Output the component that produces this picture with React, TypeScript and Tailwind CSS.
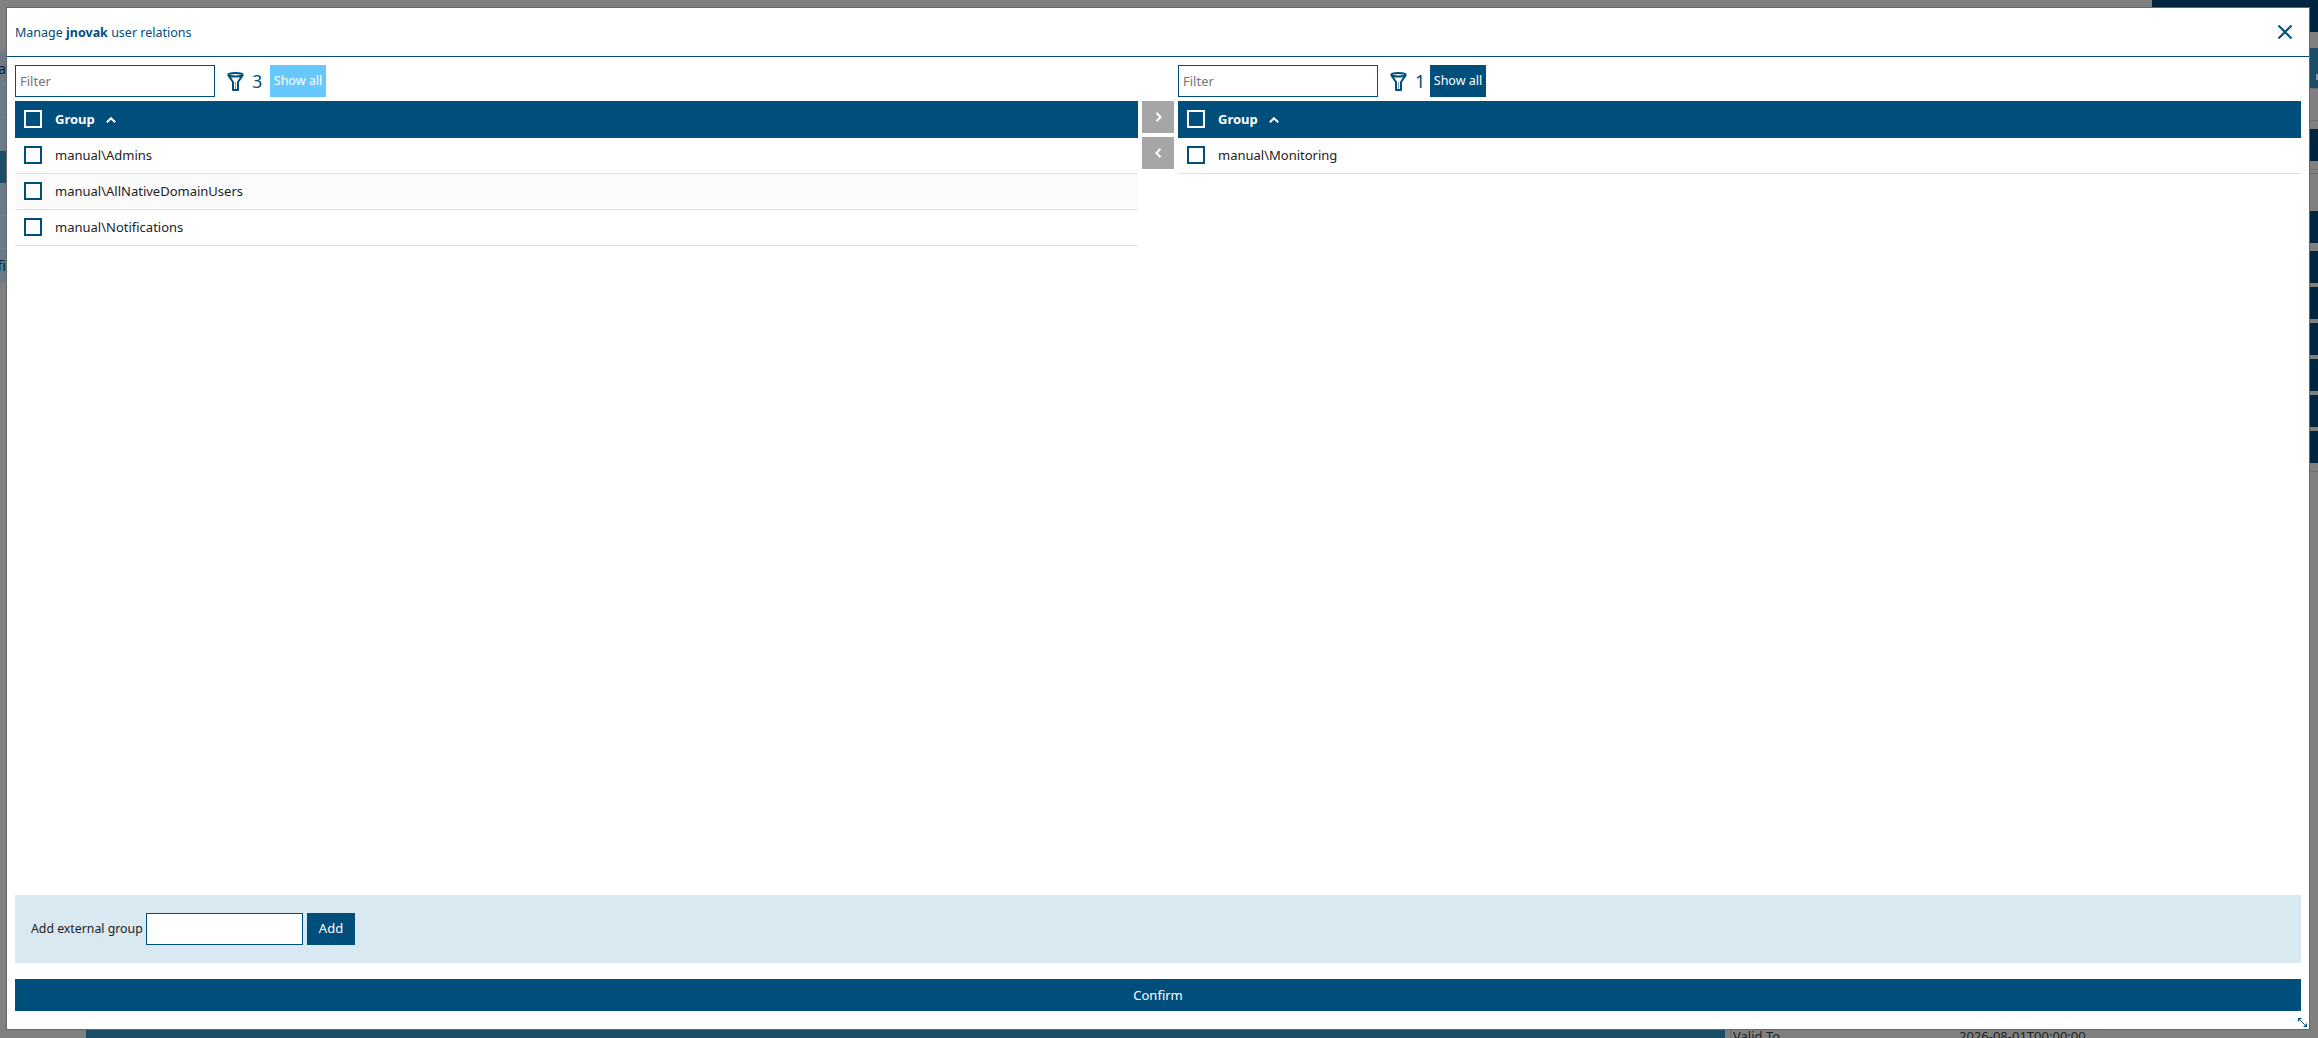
import { useState } from 'react';

const NAVY = 'bg-[#004e7c]';

function FunnelIcon() {
  return (
    <svg width="17" height="19" viewBox="0 0 17 19" fill="none" stroke="#004e7c" strokeWidth="2" className="shrink-0 block">
      <ellipse cx="8.5" cy="2.8" rx="7.2" ry="1.8" />
      <path d="M1.6 3.6 L6 10 V18 H11 V10 L15.4 3.6" strokeLinejoin="round" />
      <path d="M8.5 10 V17" strokeWidth="1" stroke="#7fa6bd" />
    </svg>
  );
}

function Checkbox({ header }: { header?: boolean }) {
  return (
    <span
      className={
        'block w-[18px] h-[18px] mb-[1px] border-2 shrink-0 ' +
        (header ? 'border-white' : 'border-[#004e7c]')
      }
    />
  );
}

function ChevronUp() {
  return (
    <svg width="10" height="6" viewBox="0 0 10 6" fill="none" stroke="white" strokeWidth="2" className="ml-[11px]">
      <path d="M0.8 5.2 L5 1.2 L9.2 5.2" />
    </svg>
  );
}

function MoveButton({ left }: { left?: boolean }) {
  return (
    <button className="w-[32px] h-[32px] bg-[#a6a6a6] flex items-center justify-center">
      <svg width="7" height="10" viewBox="0 0 7 10" fill="none" stroke="white" strokeWidth="2">
        <path d={left ? 'M5.5 0.8 L1.5 5 L5.5 9.2' : 'M1.5 0.8 L5.5 5 L1.5 9.2'} />
      </svg>
    </button>
  );
}

function GroupList({
  groups,
  count,
  dimmed,
  className,
}: {
  groups: string[];
  count: number;
  dimmed?: boolean;
  className: string;
}) {
  const [filter, setFilter] = useState('');
  return (
    <div className={'flex flex-col ' + className}>
      {/* Filter bar */}
      <div className="flex items-center h-[32px]">
        <input
          value={filter}
          onChange={(e) => setFilter(e.target.value)}
          placeholder="Filter"
          className="w-[200px] h-[32px] border border-[#004e7c] px-[4px] text-[13px] outline-none placeholder:text-[#757575]"
        />
        <span className="ml-[12px]">
          <FunnelIcon />
        </span>
        <span
          className={
            'ml-[8px] text-[18px] leading-none text-[#004e7c] ' +
            (dimmed ? 'w-[18px]' : 'w-[15px]')
          }
        >
          {count}
        </span>
        <button
          className={
            'h-[32px] w-[56px] text-white text-[12.5px] ' + (dimmed ? 'bg-[#66c8ff]' : NAVY)
          }
        >
          Show all
        </button>
      </div>

      {/* Table */}
      <div className={'mt-[4px] h-[37px] flex items-center pl-[9px] text-white ' + NAVY}>
        <Checkbox header />
        <span className="ml-[13px] text-[13px] font-bold">Group</span>
        <ChevronUp />
      </div>
      {groups.map((group, i) => (
        <div
          key={group}
          className={
            'h-[36px] flex items-center pl-[9px] border-b border-[#e0e0e8] ' +
            (i % 2 === 1 ? 'bg-[#fbfbfb]' : 'bg-white')
          }
        >
          <Checkbox />
          <span className="ml-[13px] text-[13px] text-[#222222]">{group}</span>
        </div>
      ))}
    </div>
  );
}

function LeftEdge() {
  return (
    <div className="absolute left-0 top-[52px] w-[6px] flex flex-col text-[14px] text-[#002540]">
      <div className="h-[33px] bg-[#6b7a85] border-b border-[#7d8790] flex items-center justify-end overflow-hidden">a</div>
      <div className="h-[33px] bg-[#6b7a85] border-b border-[#7d8790]" />
      <div className="h-[33px] bg-[#6b7a85]" />
      <div className="h-[32px] bg-[#1d4e68]" />
      <div className="h-[33px] bg-[#6b7a85] border-b border-[#7d8790]" />
      <div className="h-[33px] bg-[#6b7a85] border-b border-[#7d8790]" />
      <div className="h-[33px] bg-[#6b7a85] flex items-center justify-end overflow-hidden">fi</div>
    </div>
  );
}

function RightEdge() {
  return (
    <div className="absolute left-[2309px] right-0 top-0 flex flex-col">
      <div className="h-[32px] bg-[#002540]" />
      <div className="h-[16px]" />
      <div className="h-[40px] bg-[#1d4e68] flex justify-end pt-[26px]">
        <span className="block w-[2px] h-[6px] bg-[#8a9aa5]" />
      </div>
      <div className="h-[41px] border-t border-[#707070] pt-[31px]">
        <div className="border-t border-[#707070]" />
      </div>
      <div className="h-[32px] bg-[#002540]" />
      <div className="h-[50px] pt-[8px]">
        <div className="h-[5px] border-y border-[#707070]" />
      </div>
      <div className="h-[32px] bg-[#002540]" />
      <div className="h-[8px]" />
      <div className="h-[32px] bg-[#002540]" />
      <div className="h-[4px]" />
      <div className="h-[32px] bg-[#002540]" />
      <div className="h-[4px]" />
      <div className="h-[32px] bg-[#002540]" />
      <div className="h-[4px]" />
      <div className="h-[32px] bg-[#002540]" />
      <div className="h-[4px]" />
      <div className="h-[32px] bg-[#002540]" />
      <div className="h-[4px]" />
      <div className="h-[32px] bg-[#002540]" />
      <div className="h-[9px] border-b border-[#707070]" />
    </div>
  );
}

export default function App() {
  const [externalGroup, setExternalGroup] = useState('');

  return (
    <div className="relative w-full h-[1038px] bg-[#808080] overflow-hidden font-['Noto_Sans','Open_Sans',sans-serif]">
      {/* Page behind the dialog, dimmed */}
      <div className="absolute left-[2152px] right-0 top-0 h-[8px] bg-[#002540]" />
      <LeftEdge />
      <RightEdge />
      <div className="absolute left-[86px] top-[1029px] w-[1639px] h-[9px] bg-[#1d4e68]" />
      <div className="absolute left-[1730px] top-[1029px] h-[9px] border-l border-[#6a6a6a]" />
      <div className="absolute left-[1733px] top-[1026px] text-[13px] leading-[20px] text-[#222222]">Valid To</div>
      <div className="absolute left-[1959px] top-[1026px] text-[13px] leading-[20px] text-[#222222]">2026-08-01T00:00:00</div>

      {/* Dialog */}
      <div className="absolute left-[7px] top-[8px] w-[2302px] h-[1021px] bg-white flex flex-col shadow-[0_0_0_1px_#666666]">
        <div className="h-[49px] shrink-0 border-b border-[#004e7c] flex items-center justify-between pl-[8px] pr-[17px]">
          <h1 className="text-[12.5px] pt-[2px] text-[#004e7c]">
            Manage <b>jnovak</b> user relations
          </h1>
          <button aria-label="Close">
            <svg width="14" height="14" viewBox="0 0 14 14" fill="none" stroke="#004e7c" strokeWidth="2" className="block">
              <path d="M0.5 0.5 L13.5 13.5 M13.5 0.5 L0.5 13.5" />
            </svg>
          </button>
        </div>

        <div className="flex-1 flex pt-[8px] pl-[8px] pr-[8px]">
          <GroupList
            className="w-[1123px]"
            count={3}
            dimmed
            groups={['manual\\Admins', 'manual\\AllNativeDomainUsers', 'manual\\Notifications']}
          />
          <div className="w-[40px] flex flex-col items-center gap-[4px] pt-[36px]">
            <MoveButton />
            <MoveButton left />
          </div>
          <GroupList className="flex-1" count={1} groups={['manual\\Monitoring']} />
        </div>

        <div className="mx-[8px] h-[68px] shrink-0 bg-[#d9e9f2] flex items-center pl-[16px]">
          <label className="w-[111px] text-[12.3px] whitespace-nowrap text-[#222222]">Add external group</label>
          <input
            value={externalGroup}
            onChange={(e) => setExternalGroup(e.target.value)}
            className="ml-[4px] w-[157px] h-[32px] border border-[#004e7c] bg-white outline-none"
          />
          <button className={'ml-[4px] w-[48px] h-[32px] text-white text-[13px] ' + NAVY}>Add</button>
        </div>

        <button className={'mx-[8px] mt-[16px] mb-[18px] h-[32px] pt-[1px] shrink-0 text-white text-[13px] ' + NAVY}>
          Confirm
        </button>

        <svg width="9" height="9" viewBox="0 0 9 9" fill="none" stroke="#004e7c" strokeWidth="1" className="absolute right-[2px] bottom-[2px]">
          <path d="M0.5 3.5 V0.5 H3.5 M0.5 0.5 L8.5 8.5 M5.5 8.5 H8.5 V5.5" />
        </svg>
      </div>
    </div>
  );
}
